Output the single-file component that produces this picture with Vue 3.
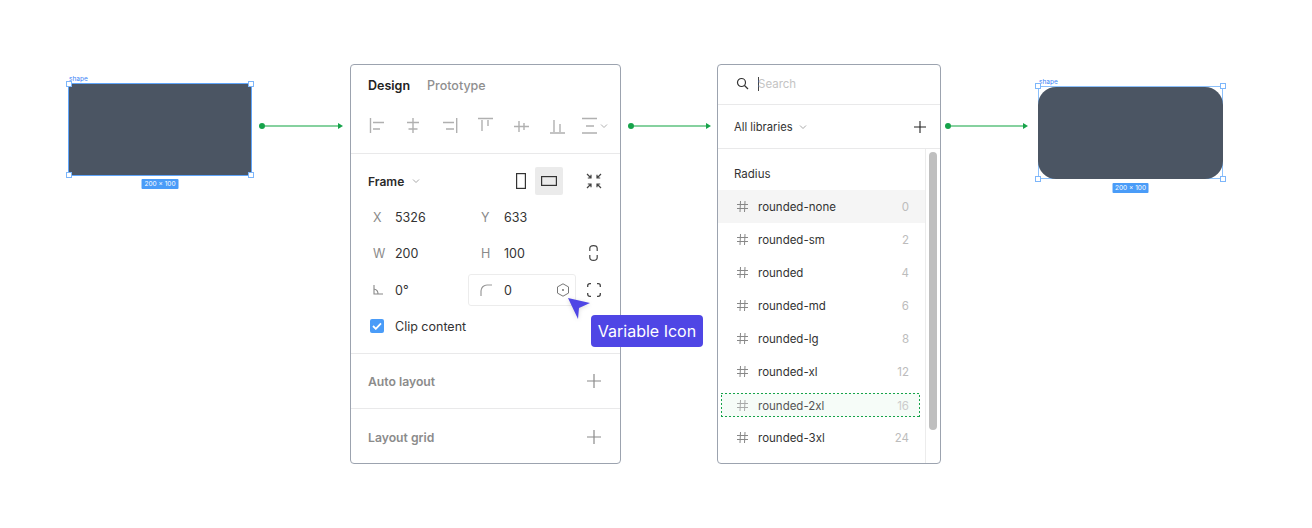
<script setup>
const alignIcons = [
  'M1.5 1v15M4 5.5h11M4 12h7',
  'M8 1v15M2 5.5h12M3.5 12h9',
  'M15.7 1v15M2 5.5h11M5 12h8',
  'M1 1.5h15M5 3v11M11 3v6',
  'M1 9.5h15M6 4v11M11 6v7',
  'M1 16h15M5 3v12M11 7v8'
]
const rows = [
  { name: 'rounded-none', val: '0', cls: 'hover' },
  { name: 'rounded-sm', val: '2' },
  { name: 'rounded', val: '4' },
  { name: 'rounded-md', val: '6' },
  { name: 'rounded-lg', val: '8' },
  { name: 'rounded-xl', val: '12' },
  { name: 'rounded-2xl', val: '16', cls: 'drop' },
  { name: 'rounded-3xl', val: '24' }
]
const arrows = [
  { id: 'a1', cls: 'arrow a1' },
  { id: 'a2', cls: 'arrow a2' },
  { id: 'a3', cls: 'arrow a3' }
]
</script>

<template>
  <div class="canvas">
    <div class="shape shape-left">
      <span class="shape-label">shape</span>
      <i class="handle tl"></i><i class="handle tr"></i><i class="handle bl"></i><i class="handle br"></i>
      <span class="size">200 × 100</span>
    </div>

    <div v-for="a in arrows" :key="a.id" :class="a.cls">
      <i class="dot"></i><i class="line"></i><i class="head"></i>
    </div>

    <section class="panel design">
      <div class="tabs">
        <span class="tab-on">Design</span>
        <span class="tab-off">Prototype</span>
      </div>
      <div class="aligns">
        <svg v-for="(d, i) in alignIcons" :key="i" width="18" height="18" viewBox="0 0 18 18" fill="none" stroke="#b0b0b0" stroke-width="1.4"><path :d="d" /></svg>
        <span class="dist">
          <svg width="16" height="18" viewBox="0 0 16 18" fill="none" stroke="#b0b0b0" stroke-width="1.4"><path d="M0 1.5h15M0 16h15M4 9h8" /></svg>
          <svg width="8" height="6" viewBox="0 0 8 6" fill="none" stroke="#b0b0b0"><path d="M1 1.5 4 4.5 7 1.5" /></svg>
        </span>
      </div>
      <div class="frame-section">
        <div class="frame-head">
          <span class="frame-title">Frame</span>
          <svg class="chev" width="8" height="6" viewBox="0 0 8 6" fill="none" stroke="#a8a8a8"><path d="M1 1.5 4 4.5 7 1.5" /></svg>
          <span class="spacer"></span>
          <span class="orient">
            <svg width="10" height="16" viewBox="0 0 10 16" fill="none" stroke="#333" stroke-width="1.2"><rect x=".6" y=".6" width="8.8" height="14.8" /></svg>
          </span>
          <span class="orient on">
            <svg width="16" height="10" viewBox="0 0 16 10" fill="none" stroke="#333" stroke-width="1.2"><rect x=".6" y=".6" width="14.8" height="8.8" /></svg>
          </span>
          <svg class="collapse" width="16" height="16" viewBox="0 0 16 16" fill="none" stroke="#444" stroke-width="1.2"><path d="M1 1l4 4M5 1.8V5H1.8M15 1l-4 4M11 1.8V5h3.2M1 15l4-4M5 14.2V11H1.8M15 15l-4-4M11 14.2V11h3.2" /></svg>
        </div>
        <div class="props">
          <div class="prop-row">
            <span class="k">X</span><span class="v w-a">5326</span>
            <span class="k k2">Y</span><span class="v">633</span>
          </div>
          <div class="prop-row">
            <span class="k">W</span><span class="v w-a">200</span>
            <span class="k k2">H</span><span class="v">100</span>
            <span class="spacer"></span>
            <svg class="row-icon" width="9" height="16" viewBox="0 0 9 16" fill="none" stroke="#444" stroke-width="1.2"><path d="M.8 6V3.5a3.7 2.9 0 0 1 7.4 0V6M.8 10v2.5a3.7 2.9 0 0 0 7.4 0V10" /></svg>
          </div>
          <div class="prop-row angle-row">
            <svg class="k-icon" width="10" height="10" viewBox="0 0 10 10" fill="none" stroke="#888" stroke-width="1.1"><path d="M1 0v9h9M1 4a5 5 0 0 1 4 5" /></svg>
            <span class="v w-b">0°</span>
            <div class="radius-box">
              <svg width="12" height="12" viewBox="0 0 12 12" fill="none" stroke="#999" stroke-width="1.2"><path d="M1 12V7a6 6 0 0 1 6-6h5" /></svg>
              <span class="v radius-val">0</span>
              <svg width="14" height="14" viewBox="0 0 14 14" fill="none" stroke="#777" stroke-width="1"><path d="M7 .8l5.5 3.1v6.2L7 13.2l-5.500-3.100V3.900z" /><circle cx="7" cy="7" r=".9" fill="#666" stroke="none" /></svg>
            </div>
            <svg class="corners" width="14" height="14" viewBox="0 0 14 14" fill="none" stroke="#444" stroke-width="1.3"><path d="M.7 4V2.700a2 2 0 0 1 2-2H4M10 .7h1.300a2 2 0 0 1 2 2V4M13.300 10v1.300a2 2 0 0 1-2 2H10M4 13.300H2.700a2 2 0 0 1-2-2V10" /></svg>
          </div>
          <div class="clip-row">
            <span class="check">
              <svg width="10" height="8" viewBox="0 0 10 8" fill="none" stroke="#fff" stroke-width="1.8"><path d="M1 4l2.800 2.800L9 1.300" /></svg>
            </span>
            <span class="v">Clip content</span>
          </div>
        </div>
      </div>
      <div class="collapsed">
        <span>Auto layout</span>
        <svg width="14" height="14" viewBox="0 0 14 14" stroke="#8a8a8a" stroke-width="1.2"><path d="M7 0v14M0 7h14" /></svg>
      </div>
      <div class="collapsed last">
        <span>Layout grid</span>
        <svg width="14" height="14" viewBox="0 0 14 14" stroke="#8a8a8a" stroke-width="1.2"><path d="M7 0v14M0 7h14" /></svg>
      </div>
    </section>

    <div class="pointer">
      <svg width="22" height="21" viewBox="0 0 22 21"><path d="M0 0 22 5 11 10 10 21z" fill="#4f46e5" /></svg>
    </div>
    <div class="tooltip">Variable Icon</div>

    <section class="panel library">
      <div class="search">
        <svg width="13" height="13" viewBox="0 0 13 13" fill="none" stroke="#333" stroke-width="1.2"><circle cx="5.5" cy="5.5" r="4" /><path d="M8.500 8.500 12 12" /></svg>
        <span class="caret"></span>
        <span class="placeholder">Search</span>
      </div>
      <div class="libs">
        <span class="libs-name">All libraries</span>
        <svg width="8" height="6" viewBox="0 0 8 6" fill="none" stroke="#a8a8a8"><path d="M1 1.500 4 4.500 7 1.500" /></svg>
        <span class="spacer"></span>
        <svg width="12" height="12" viewBox="0 0 12 12" stroke="#222" stroke-width="1.1"><path d="M6 0v12M0 6h12" /></svg>
      </div>
      <div class="list-wrap">
        <div class="list">
          <div class="list-title">Radius</div>
          <div v-for="r in rows" :key="r.name" class="row" :class="r.cls">
            <svg width="11" height="11" viewBox="0 0 11 11" fill="none" stroke="#888" stroke-width="1"><path d="M3.500 0 3 11M8 0l-.500 11M0 3.500h11M0 7.500h11" /></svg>
            <span class="row-name">{{ r.name }}</span>
            <span class="row-val">{{ r.val }}</span>
          </div>
        </div>
        <div class="track"><div class="thumb"></div></div>
      </div>
    </section>

    <div class="shape shape-right">
      <span class="shape-label">shape</span>
      <i class="handle tl"></i><i class="handle tr"></i><i class="handle bl"></i><i class="handle br"></i>
      <span class="size">200 × 100</span>
    </div>
  </div>
</template>

<style>
html, body { margin: 0; background: #fff; }
</style>

<style scoped>
.canvas {
  position: relative;
  width: 1312px;
  height: 528px;
  overflow: hidden;
  background: #fff;
  font-family: Inter, "Liberation Sans", sans-serif;
  font-size: 12.5px;
  color: #2e2e2e;
}
.spacer { flex: 1; }

.shape {
  position: absolute;
  box-sizing: border-box;
  background: #4b5563;
  border: 1px solid #60a5fa;
}
.shape-left { left: 68px; top: 83px; width: 184px; height: 93px; }
.shape-right {
  left: 1038px; top: 86px; width: 185px; height: 93px;
  border: 0;
  background: transparent;
  outline: 1px solid #8cc0fb;
  outline-offset: -1px;
}
.shape-right::before {
  content: "";
  position: absolute;
  inset: 1px 0 0 0;
  border-radius: 18px;
  background: #4b5563;
}
.shape-label {
  position: absolute;
  left: 0;
  top: -9px;
  font-size: 6.5px;
  line-height: 8px;
  color: #3b82f6;
}
.shape-right .shape-label { left: 1px; top: -8px; }
.handle {
  position: absolute;
  width: 4px;
  height: 4px;
  background: #fff;
  border: 1px solid #7db6fa;
}
.tl { left: -3px; top: -3px; }
.tr { right: -3px; top: -3px; }
.bl { left: -3px; bottom: -3px; }
.br { right: -3px; bottom: -3px; }
.size {
  position: absolute;
  left: 50%;
  top: calc(100% + 4px);
  transform: translateX(-50%);
  padding: 0 3px;
  height: 10px;
  line-height: 10px;
  border-radius: 1px;
  background: #4a9cf8;
  color: #fff;
  font-size: 6.5px;
  white-space: nowrap;
}

.arrow {
  position: absolute;
  top: 123px;
  height: 6px;
  display: flex;
  align-items: center;
}
.a1 { left: 259px; width: 84px; }
.a2 { left: 628px; width: 83px; }
.a3 { left: 945px; width: 83px; }
.dot { width: 6px; height: 6px; border-radius: 50%; background: #16a34a; flex: none; }
.line { flex: 1; height: 1.5px; background: #86d19f; }
.head {
  flex: none;
  width: 0;
  height: 0;
  margin-left: -1px;
  border-left: 5px solid #16a34a;
  border-top: 3px solid transparent;
  border-bottom: 3px solid transparent;
}

.panel {
  position: absolute;
  box-sizing: border-box;
  top: 64px;
  height: 400px;
  background: #fff;
  border: 1px solid #9ca3af;
  border-radius: 4px;
  overflow: hidden;
}
.design { left: 350px; width: 271px; }
.library { left: 717px; width: 224px; }

.tabs {
  display: flex;
  gap: 17px;
  padding: 12px 17px 0;
  height: 29px;
  line-height: 17px;
  box-sizing: border-box;
}
.tab-on { font-weight: 600; color: #222; }
.tab-off { font-weight: 500; color: #8f8f8f; }
.aligns {
  box-sizing: border-box;
  height: 60px;
  padding: 23px 0 0 18px;
  display: flex;
  align-items: flex-start;
  gap: 18px;
  border-bottom: 1px solid #e9e9ea;
}
.dist { display: flex; align-items: center; gap: 2px; margin-left: -3px; }
.frame-section { padding-bottom: 9px; border-bottom: 1px solid #e9e9ea; }
.frame-head {
  display: flex;
  align-items: center;
  height: 28px;
  margin-top: 13px;
  padding: 0 18px 0 17px;
}
.frame-title { font-weight: 600; color: #2a2a2a; font-size: 12px; }
.chev { margin-left: 8px; }
.orient {
  width: 28px;
  height: 28px;
  display: flex;
  align-items: center;
  justify-content: center;
  border-radius: 2px;
}
.orient.on { background: #ebebeb; margin-right: 23px; }
.props { padding: 0 19px 0 22px; }
.prop-row {
  display: flex;
  align-items: center;
  height: 36px;
}
.prop-row:first-child { margin-top: 4px; }
.angle-row { margin-top: 1px; }
.k { width: 22px; color: #8a8a8a; }
.k2 { width: 23px; }
.k-icon { margin-right: 12px; flex: none; }
.v { color: #333; }
.w-a { width: 86px; }
.w-b { width: 73px; flex: none; }
.row-icon { margin-right: 3px; }
.radius-box {
  box-sizing: border-box;
  flex: none;
  width: 108px;
  height: 32px;
  display: flex;
  align-items: center;
  border: 1px solid #ececec;
  border-radius: 3px;
  padding: 0 5px 0 11px;
}
.radius-val { flex: 1; margin-left: 12px; }
.corners { margin-left: 11px; flex: none; }
.clip-row {
  display: flex;
  align-items: center;
  height: 36px;
  gap: 11px;
  margin-left: -3px;
}
.check {
  width: 14px;
  height: 14px;
  display: flex;
  align-items: center;
  justify-content: center;
  border-radius: 2px;
  background: #4a9cf8;
}
.collapsed {
  box-sizing: border-box;
  height: 55px;
  display: flex;
  align-items: center;
  justify-content: space-between;
  padding: 0 19px 0 17px;
  font-weight: 600;
  font-size: 12.2px;
  color: #8b8b8b;
  border-bottom: 1px solid #e9e9ea;
}
.collapsed.last { border-bottom: 0; height: 56px; }

.pointer {
  position: absolute;
  left: 568px;
  top: 298px;
  line-height: 0;
  filter: drop-shadow(0 1px 2px rgba(0, 0, 0, .15));
}
.tooltip {
  position: absolute;
  left: 591px;
  top: 315px;
  box-sizing: border-box;
  width: 112px;
  height: 32px;
  line-height: 33px;
  text-align: center;
  border-radius: 4px;
  background: #4f46e5;
  color: #fff;
  font-size: 16px;
}

.search {
  display: flex;
  align-items: center;
  height: 40px;
  padding: 0 0 2px 18px;
  box-sizing: border-box;
  border-bottom: 1px solid #e9e9ea;
  font-size: 11.5px;
}
.caret { width: 1px; height: 14px; background: #444; margin-left: 9px; }
.placeholder { color: #c4c4c4; margin-left: -1px; }
.libs {
  display: flex;
  align-items: center;
  height: 44px;
  box-sizing: border-box;
  padding: 0 14px 0 16px;
  gap: 6px;
  border-bottom: 1px solid #e9e9ea;
  font-size: 11.2px;
}
.libs-name { color: #333; }
.list-wrap { display: flex; height: 314px; font-size: 11.5px; }
.list { width: 207px; flex: none; }
.list-title { height: 41px; padding: 17px 0 0 16px; box-sizing: border-box; line-height: 17px; color: #333; }
.row {
  box-sizing: border-box;
  display: flex;
  align-items: center;
  height: 33px;
  padding: 0 16px 0 19px;
}
.row.hover { background: #f5f5f5; }
.row.drop {
  height: 24px;
  margin: 5px 5px 4px 3px;
  padding: 0 11px 0 16px;
  background-color: #f6fcf8;
  background-image:
    repeating-linear-gradient(90deg, #16a34a 0 2px, transparent 2px 4px),
    repeating-linear-gradient(90deg, #16a34a 0 2px, transparent 2px 4px),
    repeating-linear-gradient(0deg, #16a34a 0 2px, transparent 2px 4px),
    repeating-linear-gradient(0deg, #16a34a 0 2px, transparent 2px 4px);
  background-size: 100% 1px, 100% 1px, 1px 100%, 1px 100%;
  background-position: 0 0, 0 100%, 0 0, 100% 0;
  background-repeat: no-repeat;
}
.row-name { flex: 1; margin-left: 10px; padding-top: 1px; color: #333; }
.row-val { padding-top: 1px; color: #bcbcbc; }
.row.drop .row-name { color: #555; }
.row.drop .row-val { color: #ccc; }
.row.drop svg { opacity: .7; }
.track {
  flex: 1;
  border-left: 1px solid #ececec;
  padding: 3px 3px 0 3px;
}
.thumb { height: 278px; border-radius: 4px; background: #bfbfbf; }
</style>
